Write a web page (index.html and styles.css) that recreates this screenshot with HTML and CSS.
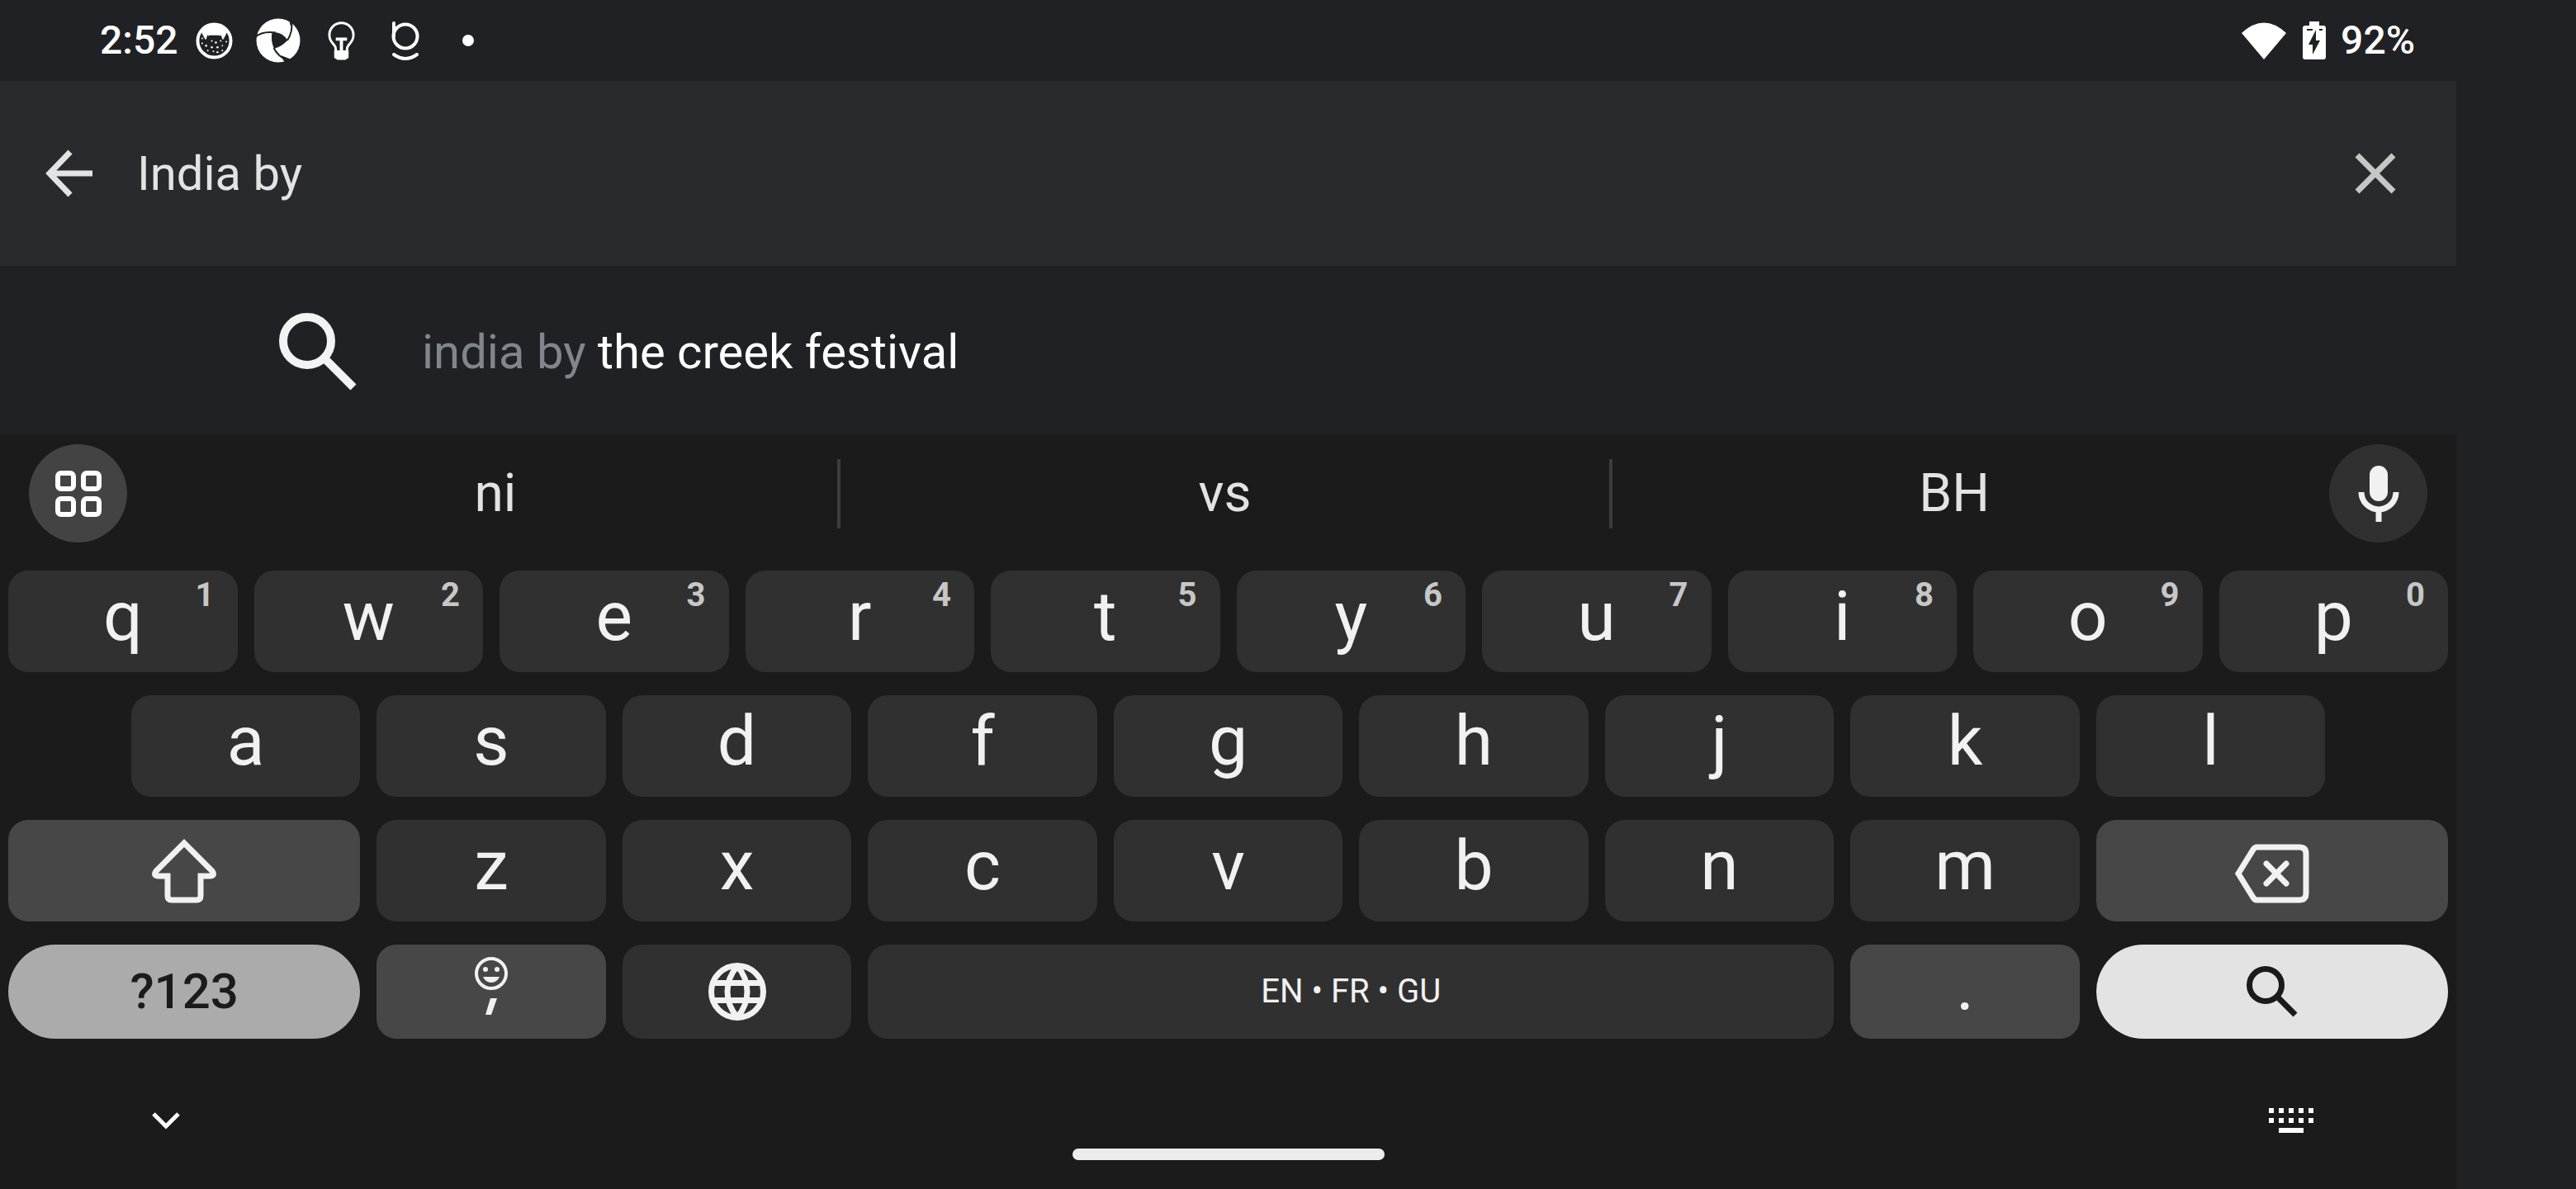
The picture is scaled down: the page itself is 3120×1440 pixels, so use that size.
FILE: index.html
```html
<!DOCTYPE html>
<html lang="en">
<head>
<meta charset="utf-8">
<title>Search</title>
<link rel="stylesheet" href="styles.css">
</head>
<body>
<div class="screen">
  <header class="status">
    <div class="status-left">
      <span class="clock">2:52</span>
      <svg class="ic-face" viewBox="0 0 46 46"><circle cx="23" cy="23" r="20.500" fill="none" stroke="#fff" stroke-width="4"/><path d="M7 12Q23-6 39 12L35 20 32 15Q30 18 29 16H17Q16 18 14 15L11 20Z" fill="#fff"/><path d="M14 14L12 21M32 14L34 21" stroke="#fff" stroke-width="2"/><g fill="#fff"><circle cx="8" cy="20" r="1"/><circle cx="8" cy="26" r="1"/><circle cx="13" cy="29" r="1.300"/><circle cx="20" cy="23" r="1"/><circle cx="25" cy="25" r="1.300"/><circle cx="31" cy="23" r="1"/><circle cx="38" cy="24" r="1"/><circle cx="20" cy="31" r="1.300"/><circle cx="27" cy="31" r="1.300"/><circle cx="33" cy="29" r="1"/><circle cx="15" cy="35" r="1"/><circle cx="22" cy="36" r="1"/><circle cx="27" cy="37" r="1.200"/><circle cx="33" cy="35" r="1"/></g></svg>
      <svg class="ic-swirl" viewBox="0 0 54 54"><circle cx="27" cy="27" r="26.500" fill="#fff"/><path d="M19.500 17.500Q31 16 38.500 26.500 32 34 22 37 17.500 27 19.500 17.500Z" fill="#202124"/><path d="M-1 23Q8 15 24 17.500M43 4Q45 16 38 27M21.500 36Q27 47 39 51.500" fill="none" stroke="#202124" stroke-width="2"/><path d="M40 1L42 10 44 7 46 5ZM30 45L35 54 43 50Z" fill="#202124"/></svg>
      <svg class="ic-bulb" viewBox="0 0 34 50"><path d="M10 47V36Q10 32 6 28A15 15 0 1 1 28 28Q24 32 24 36V47" fill="none" stroke="#fff" stroke-width="3"/><path d="M8 37H26V46L22 49H12L8 46ZM10 21H24V25H19V38H15V25H10Z" fill="#fff"/></svg>
      <svg class="ic-b" viewBox="0 0 34 48"><g fill="none" stroke="#fff" stroke-width="4" stroke-linecap="round"><path d="M3 3V19"/><circle cx="17" cy="19" r="14.500"/><path d="M3 41Q17 51 31 41"/></g></svg>
      <span class="more-dot"></span>
    </div>
    <div class="status-right">
      <svg class="ic-wifi" viewBox="0 0 54 45"><path d="M0 13Q27-12 54 13L27 45Z" fill="#fff"/></svg>
      <svg class="ic-batt" viewBox="0 0 28 46"><path d="M8 0H20V5H25Q28 5 28 8V43Q28 46 25 46H3Q0 46 0 43V8Q0 5 3 5H8Z" fill="#fff"/><path d="M16 10V23H21L12 40V28H7Z" fill="#202124"/><path d="M5 10H12M20 10H24" stroke="#202124" stroke-width="2"/></svg>
      <span class="clock">92%</span>
    </div>
  </header>
  <form class="search">
    <button type="button" class="plain" aria-label="Back"><svg class="ic-back" viewBox="0 0 56 56"><path d="M56 28H5M29 2L4 28 29 54" fill="none" stroke="#e3e3e3" stroke-width="7"/></svg></button>
    <input class="field" type="text" value="India by" aria-label="Search">
    <button type="button" class="plain" aria-label="Clear"><svg class="ic-clear" viewBox="0 0 50 50"><path d="M3 3L47 47M47 3L3 47" stroke="#c4c7c5" stroke-width="7"/></svg></button>
  </form>
  <a class="result" href="#">
    <svg class="ic-find" viewBox="0 0 94 94"><circle cx="34" cy="34" r="29" fill="none" stroke="#f1f3f4" stroke-width="10"/><path d="M55 55L90 90" stroke="#f1f3f4" stroke-width="10"/></svg>
    <span><span class="typed">india by</span> the creek festival</span>
  </a>
  <main class="keyboard">
    <div class="strip">
      <button class="round tools" aria-label="Tools"><svg class="ic-grid" viewBox="0 0 56 56"><g fill="none" stroke="#fff" stroke-width="6"><rect x="3" y="3" width="19" height="19" rx="4"/><rect x="34" y="3" width="19" height="19" rx="4"/><rect x="3" y="34" width="19" height="19" rx="4"/><rect x="34" y="34" width="19" height="19" rx="4"/></g></svg></button>
      <div class="words">
        <button class="word">ni</button><button class="word middle">vs</button><button class="word">BH</button>
      </div>
      <button class="round" aria-label="Voice input"><svg class="ic-mic" viewBox="0 0 50 68"><rect x="14" y="0" width="22" height="43" rx="11" fill="#f1f1f1"/><path d="M4 32a21 21 0 0 0 42 0M25 53V68" fill="none" stroke="#f1f1f1" stroke-width="7"/></svg></button>
    </div>
    <div class="keys">
      <button class="key">q<sup class="hint">1</sup></button>
      <button class="key">w<sup class="hint">2</sup></button>
      <button class="key">e<sup class="hint">3</sup></button>
      <button class="key">r<sup class="hint">4</sup></button>
      <button class="key">t<sup class="hint">5</sup></button>
      <button class="key">y<sup class="hint">6</sup></button>
      <button class="key">u<sup class="hint">7</sup></button>
      <button class="key">i<sup class="hint">8</sup></button>
      <button class="key">o<sup class="hint">9</sup></button>
      <button class="key">p<sup class="hint">0</sup></button>
      <button class="key indent">a</button>
      <button class="key">s</button>
      <button class="key">d</button>
      <button class="key">f</button>
      <button class="key">g</button>
      <button class="key">h</button>
      <button class="key">j</button>
      <button class="key">k</button>
      <button class="key">l</button>
      <button class="key wide func row-start" aria-label="Shift"><svg class="ic-shift" viewBox="0 0 80 76"><path d="M40 4L74 38Q78 44 71 44H60V68Q60 73 55 73H25Q20 73 20 68V44H9Q2 44 6 38Z" fill="none" stroke="#f1f1f1" stroke-width="7"/></svg></button>
      <button class="key">z</button>
      <button class="key">x</button>
      <button class="key">c</button>
      <button class="key">v</button>
      <button class="key">b</button>
      <button class="key">n</button>
      <button class="key">m</button>
      <button class="key wide func delete" aria-label="Backspace"><svg class="ic-del" viewBox="0 0 90 72"><g fill="none" stroke="#f1f1f1" stroke-width="7"><path d="M26 4H78Q86 4 86 12V60Q86 68 78 68H26Q24 68 22 65L4 36 22 7Q24 4 26 4Z"/><path d="M38 24L62 48M62 24L38 48" stroke-linecap="round"/></g></svg></button>
      <button class="key low wide symbols">?123</button>
      <button class="key low func comma" aria-label="Comma and emoji"><svg class="ic-smile" viewBox="0 0 40 40"><circle cx="20" cy="20" r="18" fill="none" stroke="#f1f1f1" stroke-width="4"/><circle cx="13" cy="15" r="3" fill="#f1f1f1"/><circle cx="27" cy="15" r="3" fill="#f1f1f1"/><path d="M10 24H30Q27 31 20 31T10 24Z" fill="#f1f1f1"/></svg><svg class="ic-comma" viewBox="0 0 14 20"><path d="M6 0H14L7 20H0Z" fill="#f1f1f1"/></svg></button>
      <button class="key low globe" aria-label="Language"><svg class="ic-globe" viewBox="0 0 70 70"><g fill="none" stroke="#f1f1f1" stroke-width="7" stroke-linejoin="round"><circle cx="35" cy="35" r="31.500"/><path d="M35 4Q23 18 23 35T35 66Q47 52 47 35T35 4ZM6 24.500H64M6 45.500H64"/></g></svg></button>
      <button class="key low space">EN • FR • GU</button>
      <button class="key low func">.</button>
      <button class="key low wide go" aria-label="Search"><svg class="ic-go" viewBox="0 0 62 62"><circle cx="23" cy="23" r="19.500" fill="none" stroke="#1b1b1b" stroke-width="7"/><path d="M38 38L59 59" stroke="#1b1b1b" stroke-width="7"/></svg></button>
    </div>
    <footer class="nav">
      <button class="plain hide" aria-label="Hide keyboard"><svg class="ic-down" viewBox="0 0 36 22"><path d="M3 3L18 18 33 3" fill="none" stroke="#fff" stroke-width="5"/></svg></button>
      <div class="handle"></div>
      <button class="plain switch" aria-label="Switch keyboard"><svg class="ic-kbd" viewBox="0 0 54 30"><path d="M0 3H54M0 15H54" stroke="#fff" stroke-width="6" stroke-dasharray="6 6"/><path d="M12 27H42" stroke="#fff" stroke-width="6"/></svg></button>
    </footer>
  </main>
</div>
</body>
</html>
```
FILE: styles.css
```css
* { box-sizing: border-box; }
body {
  margin: 0;
  min-height: 100vh;
  background: #202124;
  color: #fff;
  font-family: Roboto, "Liberation Sans", sans-serif;
}
button {
  margin: 0;
  padding: 0;
  border: 0;
  background: none;
  color: inherit;
  font: inherit;
}
svg { display: block; flex: none; overflow: visible; }
.screen {
  display: flex;
  flex-direction: column;
  min-height: 100vh;
  margin-right: 145px;
}
.plain { display: flex; align-items: center; justify-content: center; }

.status {
  display: flex;
  justify-content: space-between;
  align-items: center;
  height: 98px;
  padding: 0 50px 0 121px;
}
.status-left, .status-right { display: flex; align-items: center; }
.clock { font-size: 48px; font-weight: 500; line-height: 64px; }
.ic-face { width: 45px; margin-left: 21px; }
.ic-swirl { width: 54px; margin-left: 28px; border-radius: 50%; }
.ic-bulb { width: 33px; margin-left: 33px; }
.ic-b { width: 34px; margin-left: 44px; }
.more-dot { width: 14px; height: 14px; margin-left: 52px; border-radius: 50%; background: #fff; }
.ic-wifi { width: 54px; }
.ic-batt { width: 28px; margin: 0 18px 0 20px; }

.search {
  display: flex;
  align-items: center;
  height: 224px;
  padding: 0 73px 0 56px;
  background: #292a2d;
}
.ic-back { width: 56px; }
.ic-clear { width: 50px; }
.field {
  flex: 1;
  min-width: 0;
  margin: 0 54px;
  padding: 0;
  border: 0;
  outline: 0;
  background: none;
  color: #e3e3e3;
  font: 400 58px/72px Roboto, "Liberation Sans", sans-serif;
}
.result {
  display: flex;
  align-items: center;
  height: 204px;
  padding: 4px 0 0 338px;
  gap: 79px;
  color: #fff;
  font-size: 58px;
  line-height: 72px;
  text-decoration: none;
}
.ic-find { width: 94px; }
.typed { color: #80868b; }

.keyboard {
  flex: 1;
  display: flex;
  flex-direction: column;
  background: #1b1b1b;
}
.strip {
  display: flex;
  align-items: center;
  height: 143px;
  padding: 0 35px;
}
.round {
  display: flex;
  align-items: center;
  justify-content: center;
  width: 119px;
  height: 119px;
  border-radius: 50%;
  background: #303030;
}
.tools { background: #434343; }
.ic-grid { width: 56px; }
.ic-mic { width: 50px; }
.words { flex: 1; display: flex; padding: 0 40px 0 32px; }
.word {
  flex: 8;
  height: 84px;
  color: #e3e3e3;
  font-size: 64px;
  line-height: 84px;
}
.middle {
  flex: 9;
  border: solid #3c3c3c;
  border-width: 0 4px;
}

.keys {
  display: grid;
  grid-template-columns: repeat(20, 1fr);
  gap: 28px 20px;
  padding: 22px 10px 0;
}
.key {
  position: relative;
  grid-column-end: span 2;
  display: flex;
  align-items: center;
  justify-content: center;
  height: 123px;
  border-radius: 24px;
  background: #303030;
  color: #f1f1f1;
  font-size: 84px;
  line-height: 108px;
  padding-bottom: 12px;
}
.hint {
  position: absolute;
  top: 10px;
  right: 28px;
  color: #c7c7c7;
  font-size: 40px;
  font-weight: 700;
  line-height: 40px;
}
.indent { grid-column-start: 2; }
.row-start { grid-column-start: 1; }
.wide { grid-column-end: span 3; padding: 0; }
.func { background: #474747; }
.delete { padding-top: 6px; }
.low { height: 114px; }
.symbols {
  border-radius: 57px;
  background: #ababab;
  color: #1b1b1b;
  font-size: 60px;
  font-weight: 500;
}
.comma { flex-direction: column; gap: 10px; padding-bottom: 14px; }
.globe { padding: 0; }
.space { grid-column-end: span 8; padding: 0; font-size: 40px; }
.go { border-radius: 57px; background: #e3e3e3; }
.ic-shift { width: 80px; }
.ic-del { width: 90px; }
.ic-smile { width: 40px; }
.ic-comma { width: 14px; }
.ic-globe { width: 70px; }
.ic-go { width: 62px; }

.nav {
  flex: 1;
  display: grid;
  grid-template-columns: 1fr auto 1fr;
  align-items: center;
  min-height: 180px;
}
.nav .plain { padding-top: 16px; }
.hide { justify-self: start; margin-left: 183px; }
.switch { justify-self: end; margin-right: 173px; }
.ic-down { width: 36px; }
.ic-kbd { width: 54px; }
.handle {
  width: 378px;
  height: 14px;
  margin-top: 98px;
  border-radius: 7px;
  background: #ececec;
}
```
